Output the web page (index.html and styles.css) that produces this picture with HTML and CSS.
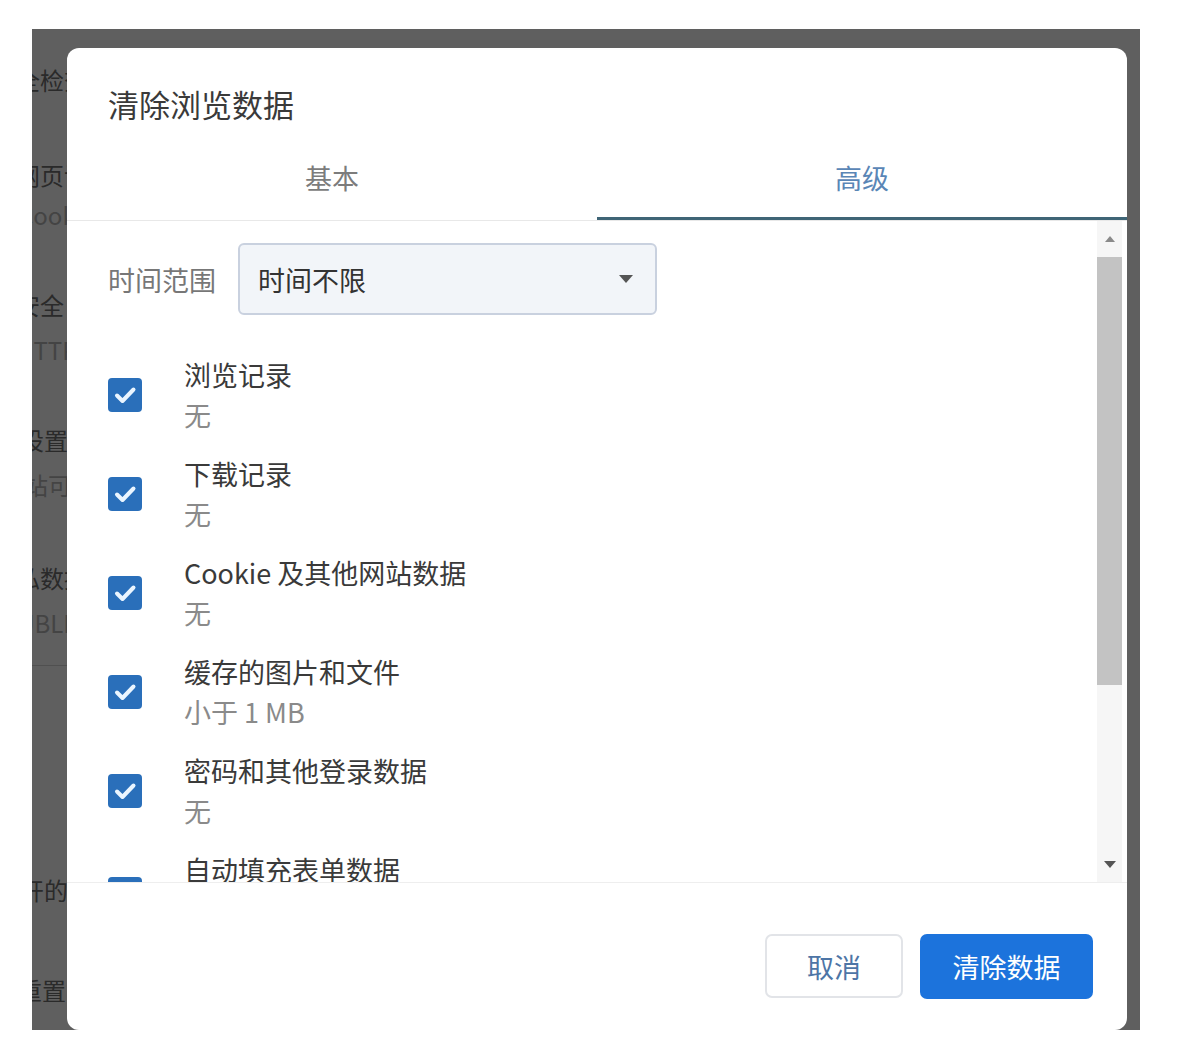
FILE: index.html
```html
<!DOCTYPE html>
<html lang="zh-CN">
<head>
  <meta charset="UTF-8">
  <meta name="viewport" content="width=device-width, initial-scale=1.0">
  <title>清除浏览数据</title>
  <link rel="stylesheet" href="styles.css">
</head>
<body>
  <div class="screen">
    <!-- settings page behind the dimmed overlay -->
    <div class="page-behind">
      <div class="bg-line dark g1 o1">安全检查</div>
      <div class="bg-line dark g2 o2">网页设置</div>
      <div class="bg-line light o3">Cookie 及其他网站数据</div>
      <div class="bg-line dark g3 o4">安全</div>
      <div class="bg-line light g4 o5">HTTPS</div>
      <div class="bg-line dark g3 o6">网站设置</div>
      <div class="bg-line light g4 o7">控制网站可以使用</div>
      <div class="bg-line dark g5 o8">隐私数据</div>
      <div class="bg-line light g4 o9">PUBLIC</div>
      <div class="bg-rule"></div>
      <div class="bg-line dark g6 o10">打开的</div>
      <div class="bg-line dark g7 o11">重置</div>
    </div>

    <div class="dialog">
      <h1 class="dialog-title">清除浏览数据</h1>

      <div class="tabs">
        <div class="tab">基本</div>
        <div class="tab active">高级</div>
      </div>

      <div class="dialog-body">
        <div class="body-scroll">
          <div class="time-range">
            <label class="time-label">时间范围</label>
            <div class="select">
              <span>时间不限</span>
              <svg class="select-arrow" width="14" height="8" viewBox="0 0 14 8"><path d="M0 0 L14 0 L7 8 Z" fill="#555"/></svg>
            </div>
          </div>

          <div class="option">
            <span class="checkbox"><svg width="34" height="34" viewBox="0 0 34 34"><path d="M9 17.5 L14.5 23 L25.5 11.5" fill="none" stroke="#eaf5ff" stroke-width="4" stroke-linecap="round" stroke-linejoin="round"/></svg></span>
            <div class="option-text">
              <div class="option-title">浏览记录</div>
              <div class="option-sub">无</div>
            </div>
          </div>

          <div class="option">
            <span class="checkbox"><svg width="34" height="34" viewBox="0 0 34 34"><path d="M9 17.5 L14.5 23 L25.5 11.5" fill="none" stroke="#eaf5ff" stroke-width="4" stroke-linecap="round" stroke-linejoin="round"/></svg></span>
            <div class="option-text">
              <div class="option-title">下载记录</div>
              <div class="option-sub">无</div>
            </div>
          </div>

          <div class="option">
            <span class="checkbox"><svg width="34" height="34" viewBox="0 0 34 34"><path d="M9 17.5 L14.5 23 L25.5 11.5" fill="none" stroke="#eaf5ff" stroke-width="4" stroke-linecap="round" stroke-linejoin="round"/></svg></span>
            <div class="option-text">
              <div class="option-title">Cookie 及其他网站数据</div>
              <div class="option-sub">无</div>
            </div>
          </div>

          <div class="option">
            <span class="checkbox"><svg width="34" height="34" viewBox="0 0 34 34"><path d="M9 17.5 L14.5 23 L25.5 11.5" fill="none" stroke="#eaf5ff" stroke-width="4" stroke-linecap="round" stroke-linejoin="round"/></svg></span>
            <div class="option-text">
              <div class="option-title">缓存的图片和文件</div>
              <div class="option-sub">小于 1 MB</div>
            </div>
          </div>

          <div class="option">
            <span class="checkbox"><svg width="34" height="34" viewBox="0 0 34 34"><path d="M9 17.5 L14.5 23 L25.5 11.5" fill="none" stroke="#eaf5ff" stroke-width="4" stroke-linecap="round" stroke-linejoin="round"/></svg></span>
            <div class="option-text">
              <div class="option-title">密码和其他登录数据</div>
              <div class="option-sub">无</div>
            </div>
          </div>

          <div class="option last">
            <span class="checkbox"><svg width="34" height="34" viewBox="0 0 34 34"><path d="M9 17.5 L14.5 23 L25.5 11.5" fill="none" stroke="#eaf5ff" stroke-width="4" stroke-linecap="round" stroke-linejoin="round"/></svg></span>
            <div class="option-text">
              <div class="option-title">自动填充表单数据</div>
              <div class="option-sub">无</div>
            </div>
          </div>
        </div>

        <div class="scrollbar">
          <div class="sb-btn"><svg width="10" height="6" viewBox="0 0 10 6"><path d="M0 6 L10 6 L5 0 Z" fill="#8a8a8a"/></svg></div>
          <div class="sb-thumb"></div>
          <div class="sb-space"></div>
          <div class="sb-btn"><svg width="12" height="7" viewBox="0 0 12 7"><path d="M0 0 L12 0 L6 7 Z" fill="#555"/></svg></div>
        </div>
      </div>

      <div class="dialog-footer">
        <button class="btn-secondary">取消</button>
        <button class="btn-primary">清除数据</button>
      </div>
    </div>
  </div>
</body>
</html>
```

FILE: styles.css
```css
body {
  margin: 0;
  background-color: #fff;
  font-family: "Noto Sans CJK SC", "Noto Sans", sans-serif;
  color: #333;
}

.screen {
  position: relative;
  margin: 29px 0 0 32px;
  width: 1108px;
  height: 1001px;
  background-color: #5f5f5f;
  overflow: hidden;
}

/* page behind */
.page-behind {
  width: 35px;
  overflow: hidden;
}

.bg-line {
  height: 40px;
  line-height: 40px;
  font-size: 24px;
  white-space: nowrap;
}

.bg-line.dark {
  color: #2a2a2a;
}

.bg-line.light {
  color: #444;
}

.g1 { margin-top: 31px; }
.g2 { margin-top: 55px; }
.g3 { margin-top: 50px; }
.g4 { margin-top: 5px; }
.g5 { margin-top: 53px; }
.g6 { margin-top: 204px; }
.g7 { margin-top: 60px; }

.o1 { margin-left: -40px; }
.o2 { margin-left: -16px; }
.o3 { margin-left: -14px; }
.o4 { margin-left: -16px; }
.o5 { margin-left: -16px; }
.o6 { margin-left: -60px; }
.o7 { margin-left: -80px; }
.o8 { margin-left: -40px; }
.o9 { margin-left: -30px; }
.o10 { margin-left: -36px; }
.o11 { margin-left: -14px; }

.bg-rule {
  margin-top: 22px;
  height: 1px;
  background-color: #505050;
}

/* dialog */
.dialog {
  position: absolute;
  left: 35px;
  top: 19px;
  width: 1060px;
  height: 982px;
  background-color: #fff;
  border-radius: 12px;
  display: flex;
  flex-direction: column;
  overflow: hidden;
}

.dialog-title {
  margin: 0;
  padding: 36px 0 0 41px;
  height: 40px;
  line-height: 40px;
  font-size: 31px;
  font-weight: 400;
  color: #3a3a3a;
}

.tabs {
  display: flex;
  border-bottom: 1px solid #e8e8e8;
}

.tab {
  flex: 1;
  text-align: center;
  padding: 34px 0 19px;
  line-height: 40px;
  font-size: 27px;
  color: #7c7c7c;
  border-bottom: 3px solid transparent;
}

.tab.active {
  color: #5a86b6;
  border-bottom-color: #3f6576;
}

.dialog-body {
  display: flex;
  height: 661px;
}

.body-scroll {
  flex: 1;
  overflow: hidden;
  padding: 22px 0 0 41px;
}

.time-range {
  display: flex;
  align-items: center;
  gap: 22px;
  margin-bottom: 40px;
}

.time-label {
  font-size: 27px;
  color: #777;
}

.select {
  width: 375px;
  height: 68px;
  padding: 0 22px 0 18px;
  border: 2px solid #c9d1df;
  border-radius: 6px;
  background-color: #f2f5f9;
  display: flex;
  align-items: center;
  justify-content: space-between;
  font-size: 27px;
  color: #333;
}

.option {
  display: flex;
  align-items: center;
  gap: 42px;
  height: 80px;
  margin-bottom: 19px;
}

.option.last .checkbox {
  margin-top: 8px;
}

.checkbox {
  width: 34px;
  height: 34px;
  flex-shrink: 0;
  border-radius: 4px;
  background-color: #2a6fba;
  display: flex;
}

.option-title,
.option-sub {
  line-height: 40px;
  font-size: 27px;
}

.option-title {
  color: #3a3a3a;
}

.option-sub {
  color: #8a8a8a;
}

/* scrollbar */
.scrollbar {
  width: 25px;
  margin-right: 5px;
  background-color: #f6f6f6;
  display: flex;
  flex-direction: column;
}

.sb-btn {
  height: 36px;
  display: flex;
  align-items: center;
  justify-content: center;
}

.sb-thumb {
  height: 428px;
  background-color: #c3c3c3;
}

.sb-space {
  flex: 1;
}

/* footer */
.dialog-footer {
  flex: 1;
  border-top: 1px solid #eeeeee;
  display: flex;
  justify-content: flex-end;
  align-items: flex-start;
  gap: 17px;
  padding: 51px 34px 0 0;
}

.btn-secondary,
.btn-primary {
  font-family: inherit;
  font-size: 27px;
  border-radius: 7px;
  cursor: pointer;
}

.btn-secondary {
  width: 138px;
  height: 64px;
  background-color: #fff;
  color: #4d75a6;
  border: 2px solid #e2e4e8;
}

.btn-primary {
  width: 173px;
  height: 65px;
  background-color: #1c73dc;
  color: #fff;
  border: none;
}
```
